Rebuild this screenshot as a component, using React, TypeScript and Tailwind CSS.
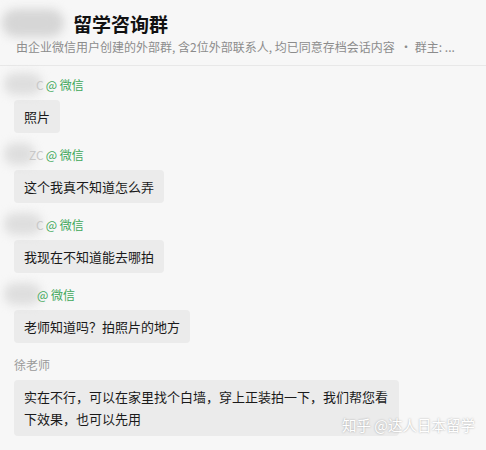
const font = { fontFamily: '"Noto Sans CJK SC", "Noto Sans", sans-serif' };

type Msg = { name: string; text: string; blurW: number };

const messages: Msg[] = [
  { name: "C", text: "照片", blurW: 24 },
  { name: "ZC", text: "这个我真不知道怎么弄", blurW: 17 },
  { name: "C", text: "我现在不知道能去哪拍", blurW: 24 },
  { name: "", text: "老师知道吗？拍照片的地方", blurW: 23 },
];

function Sender({ m }: { m: Msg }) {
  return (
    <div className="relative flex h-4 items-center pl-[12px] text-[12px] leading-none">
      <div
        className="absolute left-[4px] top-[-4px] h-[22px] rounded-full bg-[#dedede] blur-[5px]"
        style={{ width: m.blurW + 14 }}
      />
      <span className="relative text-[#c8c8c8]" style={{ marginLeft: m.blurW }}>
        {m.name}
      </span>
      <span className="relative ml-[2px] text-[#3fa85a]">@ 微信</span>
    </div>
  );
}

export default function App() {
  return (
    <div className="relative h-[450px] w-[486px] overflow-hidden bg-[#f7f7f7] text-[#1a1a1a]" style={font}>
      <div className="border-b border-[#e8e8e8] pb-[11px]">
        <div className="flex h-[40px] items-center pt-[6px]">
          <div className="ml-[2px] h-[28px] w-[62px] rounded-full bg-[#d6d6d6] blur-[5px]" />
          <h1 className="ml-[9px] text-[19px] font-bold leading-none text-[#111]">留学咨询群</h1>
        </div>
        <p className="ml-[16px] text-[12px] leading-[14px] text-[#8c8c8c]">
          由企业微信用户创建的外部群, 含2位外部联系人, 均已同意存档会话内容 &nbsp;· 群主: ...
        </p>
      </div>

      <div className="flex flex-col gap-[14px] pt-[11px]">
        {messages.map((m, i) => (
          <div key={i} className="flex flex-col gap-[7px]">
            <Sender m={m} />
            <div className="ml-[14px] self-start rounded-[4px] bg-[#ebebeb] px-[10px] py-[6px] text-[13px] leading-[21px] text-[#1a1a1a]">
              {m.text}
            </div>
          </div>
        ))}
        <div className="flex flex-col gap-[7px]">
          <div className="ml-[14px] h-4 text-[12px] leading-4 text-[#9a9a9a]">徐老师</div>
          <div className="ml-[14px] w-[385px] rounded-[4px] bg-[#ebebeb] px-[10px] py-[6px] text-[13px] leading-[22px] text-[#1a1a1a]">
            实在不行，可以在家里找个白墙，穿上正装拍一下，我们帮您看下效果，也可以先用
          </div>
        </div>
      </div>

      <div
        className="absolute left-[342px] top-[416px] text-[14.5px] leading-[18px] text-white"
        style={{ textShadow: "0 0 2px rgba(0,0,0,0.35)" }}
      >
        知乎 @达人日本留学
      </div>
    </div>
  );
}
